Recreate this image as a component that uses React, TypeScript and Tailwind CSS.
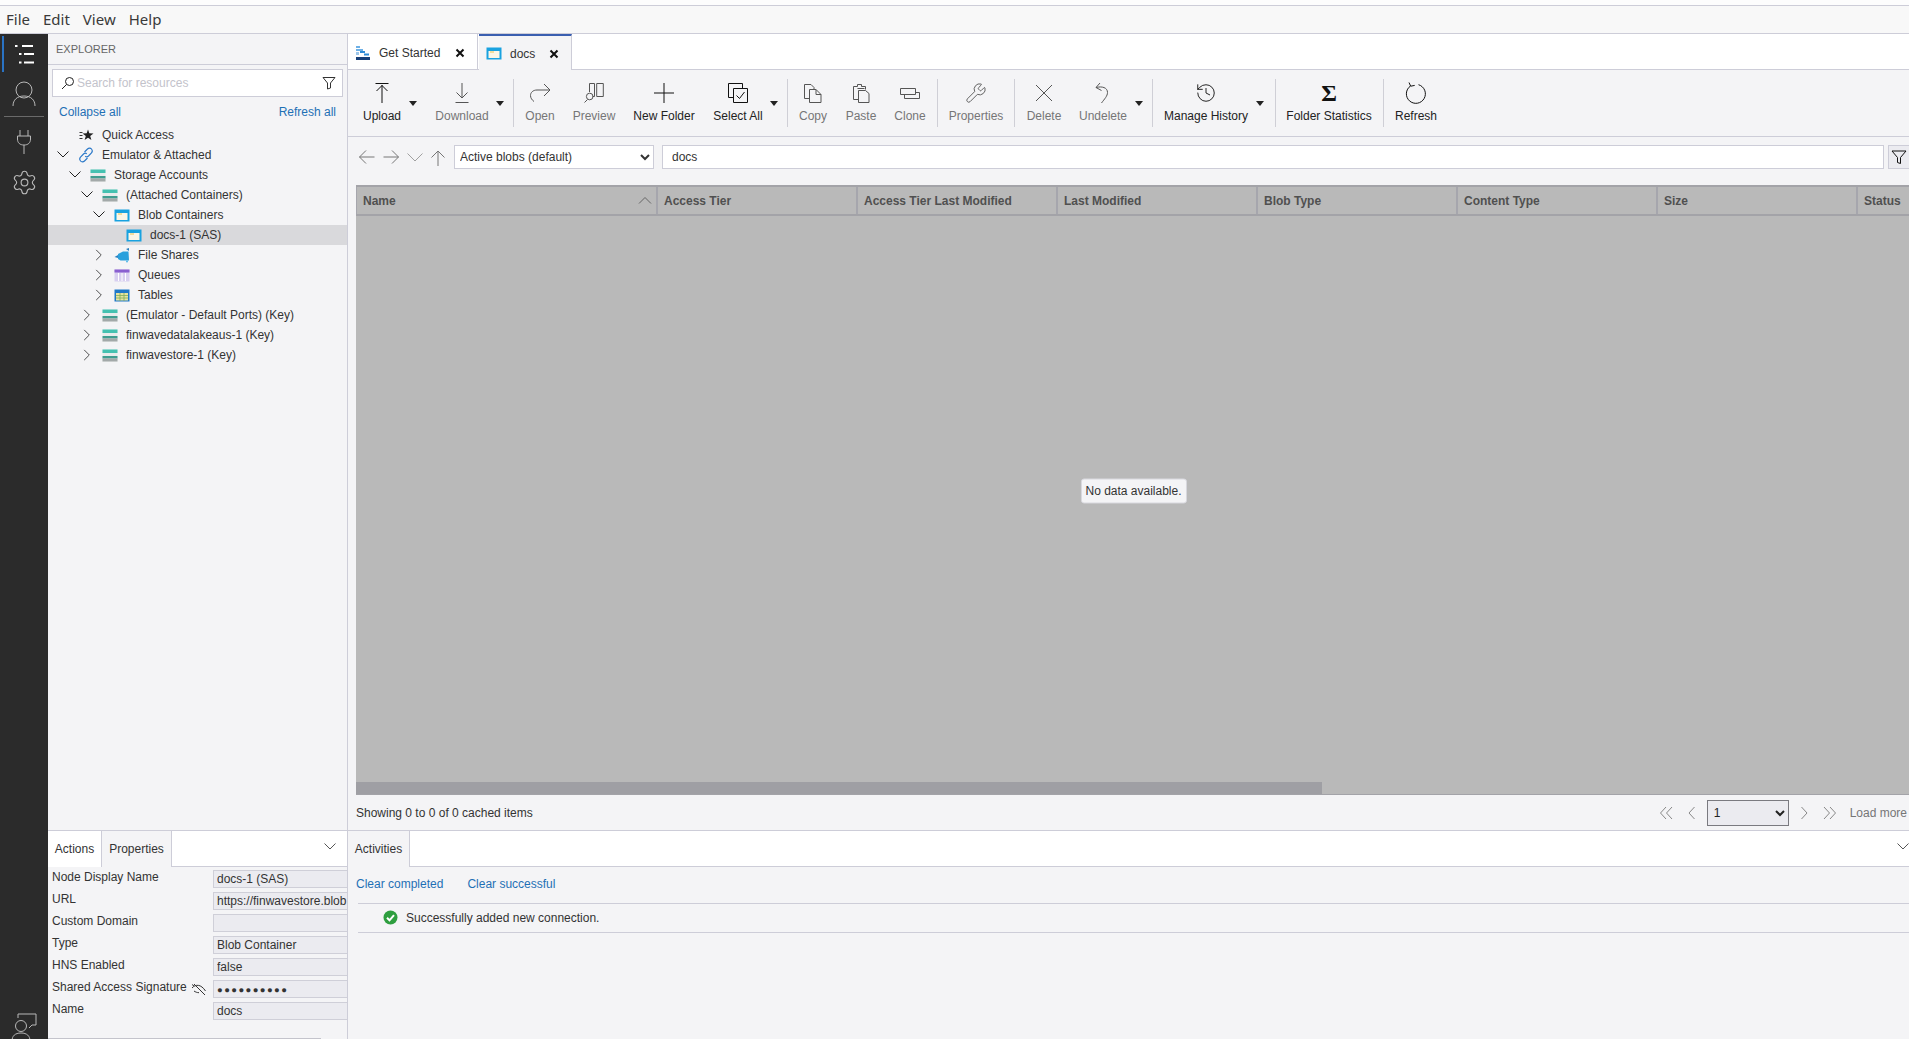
import { ReactNode } from "react";
import { History, Settings, Wrench } from "lucide-react";

const line = "border-[#cdcdd8]";

function Ic({ d, size = 24, w = 1, c = "currentColor", className = "" }: { d: string; size?: number; w?: number; c?: string; className?: string }) {
  return (
    <svg width={size} height={size} viewBox={`0 0 ${size} ${size}`} fill="none" stroke={c} strokeWidth={w} className={className}>
      <path d={d} />
    </svg>
  );
}

function Caret({ className = "" }: { className?: string }) {
  return (
    <div className={`w-[10px] h-[66px] flex items-center justify-center ${className}`}>
      <svg width="8" height="5" viewBox="0 0 8 5"><path d="M0 0h8L4 5z" fill="#222" /></svg>
    </div>
  );
}

function Sep({ className = "" }: { className?: string }) {
  return <div className={`w-px h-[48px] self-center bg-[#cfcfd6] ${className}`} />;
}

function Tool({ label, off, icon, className = "" }: { label: string; off?: boolean; icon: ReactNode; className?: string }) {
  return (
    <div className={`flex flex-col items-center pt-[11px] ${off ? "text-[#767676]" : "text-[#222]"} ${className}`}>
      <div className="h-[24px] flex items-center justify-center">{icon}</div>
      <div className="mt-[4px] leading-[14px] whitespace-nowrap">{label}</div>
    </div>
  );
}

function Storage() {
  return (
    <svg width="16" height="13" viewBox="0 0 16 13">
      <rect x="0.5" y="0.5" width="15" height="12" fill="#e8ecec" />
      <rect x="0.5" y="0.5" width="15" height="3.5" fill="#45c1b1" />
      <rect x="0.5" y="7" width="15" height="2.5" fill="#3f9d90" />
      <rect x="0.5" y="9.5" width="15" height="3" fill="#a3a9a9" />
    </svg>
  );
}

function Blob() {
  return (
    <svg width="16" height="13" viewBox="0 0 16 13">
      <rect x="0.5" y="0.5" width="15" height="12" fill="#19a2e0" />
      <rect x="2.500" y="4" width="11" height="7" fill="#fbf6e6" />
      <rect x="4" y="4" width="4" height="2" fill="#f2dd9c" />
    </svg>
  );
}

function Shares() {
  return (
    <svg width="16" height="15" viewBox="0 0 16 15">
      <path d="M4 6 9 3.500h5.500l.5 9H6.500L4 11z" fill="#2aa0dc" />
      <path d="M0.500 9 4 7v3zM12 1l3-1v3z" fill="#2a80c0" />
      <circle cx="13" cy="13.500" r="1" fill="#53b8e8" />
    </svg>
  );
}

function Queues() {
  return (
    <svg width="16" height="13" viewBox="0 0 16 13">
      <rect x="0.5" y="0.5" width="15" height="12" fill="#d8cff0" />
      <rect x="0.5" y="0.5" width="15" height="3" fill="#8a5fd0" />
      <path d="M4.500 4v8M8 4v8M11.500 4v8" stroke="#fff" />
    </svg>
  );
}

function Tables() {
  return (
    <svg width="16" height="13" viewBox="0 0 16 13">
      <rect x="0.5" y="0.5" width="15" height="12" fill="#1f78c8" />
      <rect x="2" y="4" width="12" height="7.500" fill="#e6e2a0" />
      <path d="M2 6.500h12M2 9h12M6 4v8M10 4v8" stroke="#7fae5a" strokeWidth="0.8" />
    </svg>
  );
}

function Quick() {
  return (
    <svg width="16" height="13" viewBox="0 0 16 13">
      <path d="M1.500 3.500h3M1.500 6.500h3M1.500 9.500h3" stroke="#333" />
      <path d="M10 0.500l1.300 3.700 4.200.2-3.300 2.600 1.200 4-3.400-2.300-3.400 2.300 1.200-4-3.300-2.600 4.200-.2z" fill="#222" />
    </svg>
  );
}

function Chain() {
  return (
    <svg width="16" height="16" viewBox="0 0 16 16" fill="none" stroke="#2a78c8" strokeWidth="1.1">
      <path d="M6.500 5 9.500 2c1.200-1.200 3-1.200 4 0s1 2.700 0 3.800L10.500 9c-1 1-2.400 1-3.300.2" />
      <path d="M9.500 11 6.500 14c-1.200 1.200-3 1.200-4 0s-1-2.700 0-3.800L5.500 7c1-1 2.400-1 3.300-.2" />
    </svg>
  );
}

const down = "M1.500 1.500l5.500 5.500 5.500-5.500";
const right = "M1.500 0.500l6.500 6.500-6.500 6.500";

function Row({ pad, open, shut, icon, label, active }: { pad: string; open?: boolean; shut?: boolean; icon: ReactNode; label: string; active?: boolean }) {
  return (
    <div className={`h-[20px] flex items-center ${pad} ${active ? "bg-[#d9d9dc]" : ""}`}>
      <div className="w-[14px] flex items-center justify-center">
        {open && <Ic size={14} d={down} c="#222" className="mt-[3px]" />}
        {shut && <Ic size={14} d={right} c="#222" className="ml-[3px]" />}
      </div>
      <div className="ml-[8px] w-[16px] h-[16px] flex items-center justify-center">{icon}</div>
      <div className="ml-[8px] whitespace-nowrap">{label}</div>
    </div>
  );
}

function Prop({ label, value, eye, dots }: { label: string; value: string; eye?: boolean; dots?: boolean }) {
  return (
    <div className="h-[22px] flex">
      <div className="w-[165px] pl-[4px] h-[18px] leading-[14px] flex justify-between">
        <span className="whitespace-nowrap">{label}</span>
        {eye && (
          <svg width="16" height="14" viewBox="0 0 16 14" fill="none" stroke="#333" className="mr-[6px] mt-[2px]">
            <path d="M1 6c3.500-4 9-4 13.500 3M3 2l11 11M3 9c1.500 1 3 1.700 5 1.700" />
            <path d="M1 2.500 3 4" />
          </svg>
        )}
      </div>
      <input
        readOnly
        value={value}
        className={`w-[134px] h-[18px] bg-[#ebebf0] border border-r-0 border-[#cfcfd8] pl-[3px] outline-none text-[#333] ${dots ? "text-[9.5px] tracking-[1.4px]" : "text-[12px]"}`}
      />
    </div>
  );
}

function Cols() {
  const rest = ["Access Tier", "Access Tier Last Modified", "Last Modified", "Blob Type", "Content Type", "Size", "Status"];
  return (
    <div className="h-[31px] shrink-0 flex border-t-2 border-b-2 border-[#a3a3a8] font-bold text-[#505050]">
      <div className="w-[302px] shrink-0 border-l border-r-2 border-[#a6a6ad] pl-[6px] pt-px flex items-center justify-between pr-[4px]">
        <span>Name</span>
        <Ic size={14} d="M1 9.500l6-6 6 6" c="#666" />
      </div>
      {rest.map((t) => (
        <div key={t} className="w-[200px] shrink-0 border-r-2 border-[#a6a6ad] pl-[6px] pt-px flex items-center whitespace-nowrap">{t}</div>
      ))}
    </div>
  );
}

export default function App() {
  return (
    <div className="w-screen h-screen overflow-hidden flex flex-col bg-[#f4f4f6] text-[12px] text-[#333] font-['Liberation_Sans',Arial,sans-serif]">
      <div className={`h-[6px] shrink-0 bg-[#fdfdfd] border-b ${line}`} />
      <div className={`h-[28px] shrink-0 bg-[#f8f8f8] border-b ${line} flex items-center pl-[6px] gap-[13px] text-[15px] text-[#3a3a3a] font-['Noto_Sans',sans-serif]`}>
        <span>File</span><span>Edit</span><span>View</span><span>Help</span>
      </div>

      <div className="flex-1 flex min-h-0">
        {/* activity bar */}
        <div className="w-[48px] shrink-0 bg-[#2b2b2b] flex flex-col items-center text-[#b8b8b8]">
          <div className="w-full h-[38px] pl-[2px] pt-[2px]">
            <div className="h-[36px] border-l-2 border-[#2a73c4] flex items-center justify-center">
              <svg width="24" height="24" viewBox="0 0 24 24" stroke="#fff" strokeWidth="2">
                <path d="M1 4h2.500M8 4h11M5 12h2.500M10 12h10M5 20.500h2.500M10 20.500h10" />
              </svg>
            </div>
          </div>
          <svg width="26" height="28" viewBox="0 0 26 28" fill="none" stroke="#b8b8b8" className="mt-[8px]">
            <circle cx="13" cy="10" r="8" />
            <path d="M2 26c0-6 4-10 11-10s11 4 11 10" />
          </svg>
          <div className="w-[40px] h-px bg-[#6a6a6a] mt-[8px]" />
          <svg width="16" height="26" viewBox="0 0 16 26" fill="none" stroke="#b8b8b8" className="mt-[12px]">
            <path d="M4 1v6M12 1v6M1.500 7h13v3c0 4-2.500 6-6.500 6s-6.500-2-6.500-6zM8 16v9" />
          </svg>
          <Settings size={27} strokeWidth={1} className="mt-[14px]" />
          <svg width="26" height="28" viewBox="0 0 26 28" fill="none" stroke="#b8b8b8" className="mt-auto -mb-[2px]">
            <circle cx="10" cy="13" r="5.500" />
            <path d="M1 28c0-5 3-8 9-8s9 3 9 8M7 5V1h18v11h-4l-3 3" />
          </svg>
        </div>

        {/* sidebar */}
        <div className={`w-[300px] shrink-0 border-r ${line} flex flex-col`}>
          <div className={`h-[31px] shrink-0 border-b ${line} pl-[8px] flex items-center text-[11px] text-[#666]`}>EXPLORER</div>
          <div className="flex-1 min-h-0 flex flex-col">
            <div className={`mt-[4px] mx-[4px] h-[28px] shrink-0 bg-white border ${line} flex items-center pl-[8px] pr-[6px]`}>
              <svg width="14" height="14" viewBox="0 0 14 14" fill="none" stroke="#222">
                <circle cx="8.500" cy="5.500" r="4" />
                <path d="M5.500 8.500 1 13" />
              </svg>
              <span className="ml-[2px] text-[#c3c3cb] flex-1">Search for resources</span>
              <Ic size={14} d="M1 1.500h12L8.500 7v5l-3 1V7z" c="#333" />
            </div>
            <div className="h-[20px] mt-[5px] shrink-0 flex justify-between items-center pl-[11px] pr-[11px] text-[#1f70b5]">
              <span>Collapse all</span><span>Refresh all</span>
            </div>
            <div className="mt-[3px]">
              <Row pad="pl-[8px]" icon={<Quick />} label="Quick Access" />
              <Row pad="pl-[8px]" open icon={<Chain />} label="Emulator & Attached" />
              <Row pad="pl-[20px]" open icon={<Storage />} label="Storage Accounts" />
              <Row pad="pl-[32px]" open icon={<Storage />} label="(Attached Containers)" />
              <Row pad="pl-[44px]" open icon={<Blob />} label="Blob Containers" />
              <Row pad="pl-[56px]" active icon={<Blob />} label="docs-1 (SAS)" />
              <Row pad="pl-[44px]" shut icon={<Shares />} label="File Shares" />
              <Row pad="pl-[44px]" shut icon={<Queues />} label="Queues" />
              <Row pad="pl-[44px]" shut icon={<Tables />} label="Tables" />
              <Row pad="pl-[32px]" shut icon={<Storage />} label="(Emulator - Default Ports) (Key)" />
              <Row pad="pl-[32px]" shut icon={<Storage />} label="finwavedatalakeaus-1 (Key)" />
              <Row pad="pl-[32px]" shut icon={<Storage />} label="finwavestore-1 (Key)" />
            </div>
          </div>

          <div className={`h-[209px] shrink-0 border-t ${line} flex flex-col`}>
            <div className="h-[36px] shrink-0 flex bg-white">
              <div className="w-[53px] flex items-center justify-center">Actions</div>
              <div className={`w-[71px] flex items-center justify-center bg-[#f4f4f6] border-l border-r ${line}`}>Properties</div>
              <div className={`flex-1 border-b ${line} flex items-center justify-end pr-[10px]`}>
                <Ic size={14} d={down} c="#555" />
              </div>
            </div>
            <div className="pt-[3px] flex-1">
              <Prop label="Node Display Name" value="docs-1 (SAS)" />
              <Prop label="URL" value="https://finwavestore.blob.core.windows.net/docs" />
              <Prop label="Custom Domain" value="" />
              <Prop label="Type" value="Blob Container" />
              <Prop label="HNS Enabled" value="false" />
              <Prop label="Shared Access Signature" value="●●●●●●●●●●" eye dots />
              <Prop label="Name" value="docs" />
            </div>
            <div className="h-px w-[273px] bg-[#c4c4cc] mb-[0.5px]" />
          </div>
        </div>

        {/* main */}
        <div className="flex-1 min-w-0 flex flex-col">
          <div className={`h-[36px] shrink-0 flex bg-white border-b ${line}`}>
            <div className={`w-[130px] flex items-center border-r ${line} pl-[7px] pt-[3px]`}>
              <svg width="15" height="16" viewBox="0 0 15 16">
                <path d="M1 1h4v2H1zM1 4h7v2H1z" fill="#6db0e6" />
                <path d="M5 6h5v2H5zM9 8.500h5v2H9z" fill="#2e8bd6" />
                <path d="M1 7h3v3H1z" fill="#9cc6ea" />
                <path d="M1 12h14v3H1z" fill="#173f78" />
              </svg>
              <span className="ml-[9px] text-[#333]">Get Started</span>
              <span className="ml-auto mr-[12px] text-[#111]"><Ic size={10} w={2} d="M1.500 1.500l7 7M8.500 1.500l-7 7" /></span>
            </div>
            <div className={`w-[93px] ml-[1px] -mb-px flex items-center bg-[#f4f4f6] border-t-2 border-t-[#3a5fb0] border-r ${line} pl-[7px] pt-[1px]`}>
              <Blob />
              <span className="ml-[8px]">docs</span>
              <span className="ml-auto mr-[12px] text-[#111]"><Ic size={10} w={2} d="M1.500 1.500l7 7M8.500 1.500l-7 7" /></span>
            </div>
          </div>

          <div className={`h-[67px] shrink-0 border-b ${line} flex pl-[8px]`}>
            <Tool className="w-[52px]" label="Upload" icon={<Ic d="M5.500 2.500h13M12 22V4M6.500 10 12 4.500l5.500 5.500" c="#111" />} />
            <Caret />
            <Tool className="w-[62px] ml-[13px]" off label="Download" icon={<Ic d="M12 2v15M6.500 11.500 12 17l5.500-5.500M5.500 21.500h13" c="#555" />} />
            <Caret className="ml-[2px]" />
            <Sep className="ml-[8px]" />
            <Tool className="w-[40px] ml-[6px]" off label="Open" icon={<Ic d="M16 3l6 6-6 6M22 9H9c-4 0-6.500 2.500-6.500 5.500 0 2.500 1.500 4.500 3.500 6" c="#555" />} />
            <Tool className="w-[50px] ml-[9px]" off label="Preview" icon={<Ic d="M7.500 11V2.500h5v13h-2M14.700 2.500h6.600v13h-6.600zM5.500 18.500l-3 3M11 15.500a3.300 3.300 0 1 1-6.600 0 3.300 3.300 0 0 1 6.600 0z" c="#555" />} />
            <Tool className="w-[66px] ml-[12px]" label="New Folder" icon={<Ic d="M12 2v20M2 12h20" c="#111" />} />
            <Tool className="w-[56px] ml-[13px]" label="Select All" icon={<Ic d="M7.500 16.500h-5v-14h14v5M7.500 7.500h14v14h-14zM10.500 14.500l3 3 5-6.500" c="#111" />} />
            <Caret className="ml-[3px]" />
            <Sep className="ml-[8px]" />
            <Tool className="w-[36px] ml-[7px]" off label="Copy" icon={<Ic d="M8.500 17.500h-5v-14H10l3 3v2M8.500 8.500H15l5 5v8H8.500zM15 8.500v5h5" c="#555" />} />
            <Tool className="w-[36px] ml-[12px]" off label="Paste" icon={<Ic d="M9.500 18.500h-5V5.500h4v-2h4v2h4v3M9.500 9.500h7l3.500 3v9H9.500zM8.500 7.500h7" c="#555" />} />
            <Tool className="w-[36px] ml-[13px]" off label="Clone" icon={<Ic d="M2.500 7.500h15v6h-15zM6.500 13.500v4h15v-6h-4" c="#555" />} />
            <Sep className="ml-[9px]" />
            <Tool className="w-[60px] ml-[8px]" off label="Properties" icon={<Wrench size={22} strokeWidth={1} color="#555" />} />
            <Sep className="ml-[8px]" />
            <Tool className="w-[40px] ml-[9px]" off label="Delete" icon={<Ic d="M4 4l16 16M20 4 4 20" c="#555" />} />
            <Tool className="w-[50px] ml-[14px]" off label="Undelete" icon={<Ic d="M9 2 5 6.500l5.500 3M5 6.500c6-1.500 11.500 0 11.500 5 0 3.500-3 6.500-6 10.500" c="#555" />} />
            <Caret className="ml-[6px]" />
            <Sep className="ml-[8px]" />
            <Tool className="w-[86px] ml-[10px]" label="Manage History" icon={<History size={22} strokeWidth={1} color="#111" />} />
            <Caret className="ml-[6px]" />
            <Sep className="ml-[10px]" />
            <Tool className="w-[86px] ml-[10px]" label="Folder Statistics" icon={<span className="text-[24px] font-bold leading-[24px] text-[#111] font-['Liberation_Serif',serif]">Σ</span>} />
            <Sep className="ml-[11px]" />
            <Tool className="w-[44px] ml-[10px]" label="Refresh" icon={<Ic d="M14.500 3.700A9.500 9.500 0 1 1 6.500 5M5 1.500l1.700 3.700 4-.8" c="#111" />} />
          </div>

          <div className="h-[48px] shrink-0 flex items-start pt-[8px] pl-[10px]">
            <Ic size={18} d="M1.500 9h15M8 2.500 1.500 9 8 15.500" c="#767676" className="mt-[3px]" />
            <Ic size={18} d="M1.500 9h15M10 2.500 16.500 9 10 15.500" c="#767676" className="mt-[3px] ml-[6px]" />
            <Ic size={18} d="M1.500 5.500 9 13l7.500-7.500" c="#a0a0a0" className="mt-[3px] ml-[6px]" />
            <Ic size={18} d="M9 17V2M2.500 8.500 9 2l6.500 6.500" c="#767676" className="mt-[4px] ml-[5px]" />
            <select defaultValue="a" className={`ml-[7px] w-[200px] h-[24px] bg-white border ${line} pl-[1px] outline-none text-[12px] text-[#333]`}>
              <option value="a">Active blobs (default)</option>
            </select>
            <input readOnly value="docs" className={`ml-[8px] flex-1 min-w-0 h-[24px] bg-white border ${line} pl-[9px] outline-none text-[12px] text-[#333]`} />
            <div className={`ml-[4px] w-[21px] h-[24px] bg-[#ebebf0] border border-r-0 ${line} flex items-center justify-center`}>
              <Ic size={16} d="M1 2h14L9.500 8.500v6l-3-1v-5z" c="#111" />
            </div>
          </div>

          <div className="flex-1 min-h-0 relative ml-[8px] bg-[#b9b9b9] border-b border-[#a3a3a8] flex flex-col overflow-hidden">
            <Cols />
            <div className="flex-1" />
            <div className="h-[12px] w-[966px] shrink-0 bg-[#9f9fa4]" />
            <div className="absolute left-1/2 top-1/2 -translate-x-1/2 -translate-y-1/2 ml-[1px] mt-[1px] px-[4px] h-[25px] flex items-center bg-[#f4f4f6] border border-[#d8d8de] rounded-[3px] whitespace-nowrap">
              No data available.
            </div>
          </div>

          <div className="h-[35px] shrink-0 flex items-center pl-[8px]">
            <span className="whitespace-nowrap">Showing 0 to 0 of 0 cached items</span>
            <div className="ml-auto flex items-center text-[#767676]">
              <Ic size={14} d="M7 1 1.500 7 7 13M13 1 7.500 7l5.500 6" c="#888" />
              <Ic size={14} d="M9.500 1 4 7l5.500 6" c="#888" className="ml-[12px]" />
              <select defaultValue="1" className="ml-[8px] w-[82px] h-[26px] bg-[#ebebf0] border border-[#7a7a80] pl-[2px] outline-none text-[12px] text-[#222]">
                <option value="1">1</option>
              </select>
              <Ic size={14} d="M4.500 1 10 7l-5.500 6" c="#888" className="ml-[8px]" />
              <Ic size={14} d="M1 1l5.500 6L1 13M7 1l5.500 6L7 13" c="#888" className="ml-[12px]" />
              <span className="ml-[13px] mr-[2px] whitespace-nowrap">Load more</span>
            </div>
          </div>

          <div className={`h-[209px] shrink-0 border-t ${line} flex flex-col`}>
            <div className="h-[36px] shrink-0 flex bg-white">
              <div className={`w-[62px] flex items-center justify-center bg-[#f4f4f6] border-r ${line}`}>Activities</div>
              <div className={`flex-1 border-b ${line} flex items-center justify-end`}>
                <Ic size={14} d={down} c="#555" className="-mr-[1px]" />
              </div>
            </div>
            <div className="h-[36px] shrink-0 pl-[8px] pb-[3px] flex items-center gap-[24px] text-[#1f70b5]">
              <span>Clear completed</span><span>Clear successful</span>
            </div>
            <div className={`ml-[10px] h-[30px] pb-[1px] shrink-0 border-t border-b ${line} flex items-center pl-[25px]`}>
              <svg width="15" height="15" viewBox="0 0 15 15">
                <circle cx="7.500" cy="7.500" r="7" fill="#2e9e3f" />
                <path d="M4 7.800l2.500 2.500L11 5.200" fill="none" stroke="#fff" strokeWidth="2" />
              </svg>
              <span className="ml-[8px] whitespace-nowrap">Successfully added new connection.</span>
            </div>
          </div>
        </div>
      </div>
    </div>
  );
}
